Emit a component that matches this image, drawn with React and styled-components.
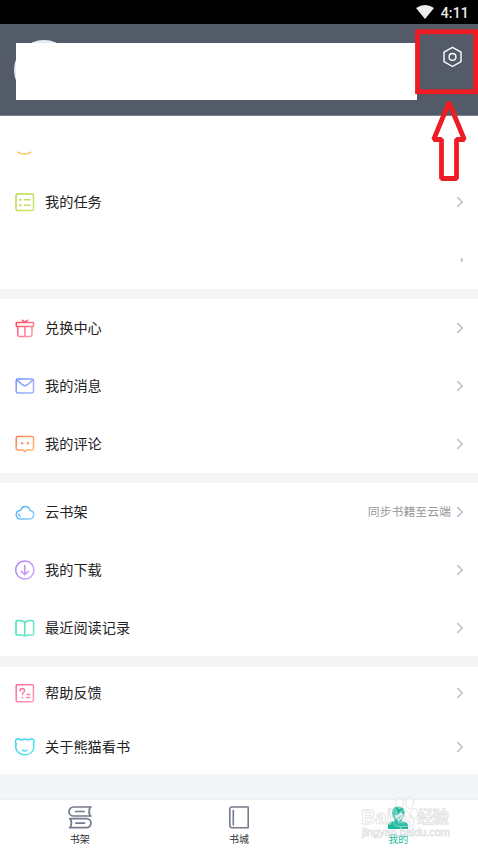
import styled, {createGlobalStyle} from "styled-components";

const GlobalStyle = createGlobalStyle`
  body{
    margin: 0;
    background: #fff;
    font-family: "Noto Sans CJK SC", sans-serif;
  }
`

const Page = styled.div`
  position: relative;
  width: 478px;
  height: 850px;
  display: flex;
  flex-direction: column;
  overflow: hidden;
  background: #f4f5f8;
`

const StatusBar = styled.div`
  height: 24px;
  flex-shrink: 0;
  box-sizing: border-box;
  padding-right: 9px;
  display: flex;
  align-items: center;
  justify-content: flex-end;
  gap: 7px;
  background: #000;
  color: #ececec;
  font: 500 14px/24px Roboto, sans-serif;
  letter-spacing: 0.2px;
  span{
    padding-top: 2px;
  }
`

const Header = styled.div`
  position: relative;
  height: 92px;
  flex-shrink: 0;
  box-sizing: border-box;
  padding: 16px 15px 0 14px;
  display: flex;
  justify-content: space-between;
  background: #545b68;
  border-bottom: 1px solid #7c818b;
  svg{
    margin-top: 6px;
  }
`

const Avatar = styled.div`
  width: 60px;
  height: 60px;
  border-radius: 50%;
  background: #e6ebf8;
`

const Cover = styled.div`
  position: absolute;
  left: 16px;
  top: 19px;
  width: 401px;
  height: 57px;
  background: #fff;
`

const Group = styled.div`
  flex-shrink: 0;
  background: #fff;
  border-bottom: ${p => p.$gap}px solid #f4f4f4;
`

const Row = styled.div`
  height: ${p => p.$height || 58}px;
  box-sizing: border-box;
  padding: 0 14px 0 15px;
  display: flex;
  align-items: center;
  color: #222;
  font-size: 14.2px;
  line-height: 20px;
`

const Label = styled.span`
  flex: 1;
  margin-left: 10px;
  padding-bottom: 2px;
`

const Note = styled.span`
  margin-right: 5px;
  padding-bottom: 2px;
  color: #999;
  font-size: 11.9px;
`

const Spacer = styled.div`
  flex: 1;
`

const TabBar = styled.div`
  height: 50px;
  display: flex;
  background: #fff;
  box-shadow: 0 -1px 2px rgba(0, 0, 0, 0.04);
`

const Tab = styled.div`
  flex: 1;
  display: flex;
  flex-direction: column;
  align-items: center;
  padding-top: 5px;
  color: ${p => p.$active ? "#1abc9c" : "#2d3038"};
  font-size: 10px;
  line-height: 14px;
  svg{
    margin-bottom: 3px;
  }
`

const Marker = styled.svg`
  position: absolute;
  left: 415px;
  top: 29px;
`

const Watermark = styled.svg`
  position: absolute;
  left: 356px;
  top: 794px;
`

const Line = ({id, from, to, children}) => (
    <svg width="20" height="20" viewBox="0 0 20 20" fill="none" stroke={`url(#${id})`} strokeWidth="1.5" strokeLinecap="round" strokeLinejoin="round">
        <defs>
            <linearGradient id={id} gradientUnits="userSpaceOnUse" x1="1" y1="1" x2="19" y2="19">
                <stop stopColor={from}/>
                <stop offset="1" stopColor={to}/>
            </linearGradient>
        </defs>
        {children}
    </svg>
)

const Smile = () => <Line id="smile" from="#ffb43c" to="#ffc95c">
    <path d="M3 17.2q6.500 4 13 0"/>
</Line>

const Task = () => <Line id="task" from="#b4d644" to="#d0e468">
    <rect x="1" y="2" width="17.500" height="16.600" rx="1.500"/>
    <path d="M9.500 7.800H15M9.500 13.200H15"/>
    <path d="M5.300 7.800h.1M5.300 13.200h.1" strokeWidth="2.200"/>
</Line>

const Gift = () => <Line id="gift" from="#ff4056" to="#ff9fb8">
    <rect x="1.300" y="4.600" width="17.200" height="3.900" rx=".5"/>
    <path d="M2.800 8.500v8.300q0 1.700 1.700 1.700h10.800q1.700 0 1.700-1.700V8.500M9.900 8.500v10M7.200 2.200l2.700 2.200 2.700-2.200"/>
</Line>

const Mail = () => <Line id="mail" from="#6f8cff" to="#a8bcf8">
    <rect x="1.200" y="3" width="17.300" height="14" rx="1.500"/>
    <path d="M1.800 3.700l5.500 5q2.600 2 5.200 0l5.400-5"/>
</Line>

const Comment = () => <Line id="comment" from="#ff7850" to="#ffc078">
    <path d="M2.700 2.500H17q1.500 0 1.500 1.500v10.500q0 1.500-1.500 1.500h-5.300l-1.800 1.600L8 16H2.700q-1.500 0-1.500-1.500V4q0-1.500 1.500-1.500z"/>
    <path d="M7.100 9.300h.1M12.800 9.300h.1" strokeWidth="2.500"/>
</Line>

const Cloud = () => <Line id="cloud" from="#4faaf6" to="#8cd2ff">
    <path d="M5 16.900a4.300 4.300 0 0 1-.2-8.500q.8-.1 1.100-.3a4.700 4.700 0 0 1 9-.3q0 .6.4.8a4.200 4.200 0 0 1-.4 8.300z"/>
    <path d="M3.800 12.200q.3 1.500 1.500 2.100"/>
</Line>

const Download = () => <Line id="download" from="#b076fa" to="#d5a8fa">
    <circle cx="9.800" cy="10" r="9.100"/>
    <path d="M9.800 5.500v9M6.200 11.300l3.600 3.300 3.600-3.300"/>
</Line>

const Book = () => <Line id="book" from="#34ddb0" to="#7ce8cd">
    <path d="M9.800 4.200Q6 2 2 2.800q-1 .3-1 1.400v11.700q0 1.100 1.200 1.100h4.300l3.300 1 3.300-1h4.300q1.200 0 1.200-1.100V4.200q0-1.100-1-1.400-4-.8-7.800 1.400zV18"/>
</Line>

const Help = () => <Line id="help" from="#ff6396" to="#ff9cc0">
    <rect x="1.200" y="1.700" width="17.200" height="17" rx="1.200"/>
    <path d="M5 8q0-2.500 2.400-2.500 2.300.1 2.200 2.300 0 1-1.200 1.800-1 .8-1 2M12 11.600h3M11.500 14.600H15"/>
    <path d="M7.300 14.600h.1" strokeWidth="1.900"/>
</Line>

const Panda = () => <Line id="panda" from="#36cfe8" to="#5ee6f4">
    <path d="M5.400 2.900q4.400-1.300 8.800 0 2.200-2 4.300-.3 1.500 2-.1 4.200 1.400 4.600-1.200 7.800-2.700 3.200-7.400 3.200t-7.400-3.200Q-.2 11.400 1.200 6.800-.4 4.600 1.100 2.600 3.200.9 5.400 2.900z"/>
    <path d="M7.500 13.200q2.300 1.700 4.600 0"/>
</Line>

const Arrow = () => (
    <svg width="8" height="12" viewBox="0 0 8 12" fill="none" stroke="#c4c4d0" strokeWidth="1.700">
        <path d="M1.300 1.200l4.900 4.800-4.900 4.800"/>
    </svg>
)

const groups = [
    [
        {icon: Task, label: "我的任务"},
    ],
    [
        {icon: Gift, label: "兑换中心"},
        {icon: Mail, label: "我的消息"},
        {icon: Comment, label: "我的评论"},
    ],
    [
        {icon: Cloud, label: "云书架", note: "同步书籍至云端"},
        {icon: Download, label: "我的下载"},
        {icon: Book, label: "最近阅读记录", height: 57},
    ],
    [
        {icon: Help, label: "帮助反馈", height: 52},
        {icon: Panda, label: "关于熊猫看书", height: 55},
    ],
]

const gaps = [10, 10, 11, 0]

const Item = ({icon: Icon, label, note, height}) => (
    <Row $height={height}>
        <Icon/>
        <Label>{label}</Label>
        {note && <Note>{note}</Note>}
        <Arrow/>
    </Row>
)

export default function App(){
    return <Page>
        <GlobalStyle/>
        <StatusBar>
            <svg width="18" height="14" viewBox="0 0 18 14">
                <path d="M0 3Q9-3 18 3L9 14z" fill="#ececec"/>
            </svg>
            <span>4:11</span>
        </StatusBar>
        <Header>
            <Avatar/>
            <Cover/>
            <svg width="21" height="22" viewBox="0 0 21 22" fill="none" stroke="#fff" strokeWidth="1.400" strokeLinejoin="round">
                <path d="M10.500 1.300l8.500 4.800v9.600l-8.500 4.800L2 15.700V6.100z"/>
                <circle cx="10.500" cy="10.900" r="3.400"/>
            </svg>
        </Header>
        <Group $gap={gaps[0]}>
            <Row $height={57}>
                <Smile/>
            </Row>
            <Item {...groups[0][0]}/>
            <Row>
                <Spacer/>
                <svg width="3" height="4" viewBox="0 0 3 4">
                    <path d="M0 0h1l1 2-1 2H0z" fill="#b8b8c4"/>
                </svg>
            </Row>
        </Group>
        {groups.slice(1).map((items, i) => (
            <Group key={i} $gap={gaps[i + 1]}>
                {items.map(item => <Item key={item.label} {...item}/>)}
            </Group>
        ))}
        <Spacer/>
        <TabBar>
            <Tab>
                <svg width="24" height="24" viewBox="0 0 24 24" fill="none" stroke="#747b8b" strokeWidth="1.700" strokeLinecap="round" strokeLinejoin="round">
                    <path d="M23 2H5.500a4.300 4.300 0 0 0 0 9H23M22 2q-1.800 4.500 0 9M7.500 6.500h8.500"/>
                    <path d="M1.500 13.600h17a4.500 4.500 0 0 1 0 9h-17M2.500 13.600q1.800 4.500 0 9M8 18.200h8.500"/>
                </svg>
                书架
            </Tab>
            <Tab>
                <svg width="24" height="24" viewBox="0 0 24 24" fill="none" stroke="#747b8b" strokeWidth="1.600" strokeLinejoin="round">
                    <path d="M5 2h16.200v20.800H5q-2.200 0-2.200-2.200V4.200Q2.800 2 5 2z"/>
                    <path d="M6.300 5.500v14.500" strokeLinecap="round"/>
                </svg>
                书城
            </Tab>
            <Tab $active>
                <svg width="24" height="24" viewBox="0 0 24 24">
                    <path d="M2 24v-3.500q0-2.500 3-3.500l3.500-1v-2Q6 12 6 8q0-6.500 6.300-6.500T18.500 8q0 4-2.800 6v2l3.300 1q3 1 3 3.500V24z" fill="#16bb9e"/>
                    <path d="M8.500 10.500q4.500-.5 6.500-3.500l1.500 1.500v4l-3 3q-3.500-.3-5-5z" fill="#e5f5f2"/>
                    <path d="M11 13q2.500 1.200 3.500-2.500" fill="none" stroke="#16bb9e" strokeWidth="1.300"/>
                </svg>
                我的
            </Tab>
        </TabBar>
        <Watermark width="100" height="48" viewBox="0 0 100 48" fill="#fff" fillOpacity=".3" stroke="#d3d5d7" strokeOpacity=".7" strokeWidth=".9" fontFamily="Liberation Sans, sans-serif">
            <text x="5" y="30" fontSize="21" textLength="31" lengthAdjust="spacingAndGlyphs" fontWeight="700">Bai</text>
            <text x="61" y="29" fontSize="16.500" fontWeight="500" fontFamily="Noto Sans CJK SC, sans-serif" textLength="32">经验</text>
            <ellipse cx="37" cy="19" rx="4" ry="5"/>
            <ellipse cx="43.500" cy="9" rx="4" ry="5.500"/>
            <ellipse cx="53.500" cy="9" rx="4" ry="5.500"/>
            <ellipse cx="58.500" cy="19.500" rx="3.700" ry="5"/>
            <path d="M48 16q3.500 0 6 5 4.500 4 4 7.500-.5 4-5 4H42.500q-5 0-5-4 0-3.500 4.500-7.500 2.500-5 6-5z" fillOpacity=".1"/>
            <text x="41" y="29" fontSize="12" fontWeight="700" strokeWidth=".5">du</text>
            <text x="6" y="41.500" fontSize="11" textLength="88" strokeWidth=".8">jingyan.baidu.com</text>
        </Watermark>
        <Marker width="63" height="153" viewBox="0 0 63 153" fill="none" stroke="#ee1c25" strokeWidth="4.800">
            <rect x="2.500" y="2.700" width="58.100" height="60"/>
            <path d="M34 73.500L18.700 110.500h7.800v39h15v-39h7.800z" strokeLinejoin="bevel"/>
        </Marker>
    </Page>
}
